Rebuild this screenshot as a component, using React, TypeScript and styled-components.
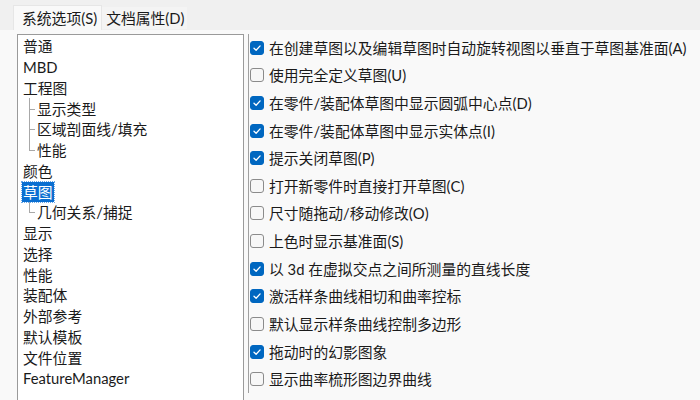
import styled, { createGlobalStyle, css } from 'styled-components';

const GlobalStyle = createGlobalStyle`
    html, body {
        margin: 0;
        padding: 0;
        background: #f0f0f0;
        overflow: hidden;
    }
    * {
        box-sizing: border-box;
    }
`;

type TreeNode = { label: string; level: number; last?: boolean; selected?: boolean };

const treeItems: TreeNode[] = [
    { label: '普通', level: 0 },
    { label: 'MBD', level: 0 },
    { label: '工程图', level: 0 },
    { label: '显示类型', level: 1 },
    { label: '区域剖面线/填充', level: 1 },
    { label: '性能', level: 1, last: true },
    { label: '颜色', level: 0 },
    { label: '草图', level: 0, selected: true },
    { label: '几何关系/捕捉', level: 1, last: true },
    { label: '显示', level: 0 },
    { label: '选择', level: 0 },
    { label: '性能', level: 0 },
    { label: '装配体', level: 0 },
    { label: '外部参考', level: 0 },
    { label: '默认模板', level: 0 },
    { label: '文件位置', level: 0 },
    { label: 'FeatureManager', level: 0 }
];

const options: { label: string; checked: boolean }[] = [
    { label: '在创建草图以及编辑草图时自动旋转视图以垂直于草图基准面(A)', checked: true },
    { label: '使用完全定义草图(U)', checked: false },
    { label: '在零件/装配体草图中显示圆弧中心点(D)', checked: true },
    { label: '在零件/装配体草图中显示实体点(I)', checked: true },
    { label: '提示关闭草图(P)', checked: true },
    { label: '打开新零件时直接打开草图(C)', checked: false },
    { label: '尺寸随拖动/移动修改(O)', checked: false },
    { label: '上色时显示基准面(S)', checked: false },
    { label: '以 3d 在虚拟交点之间所测量的直线长度', checked: true },
    { label: '激活样条曲线相切和曲率控标', checked: true },
    { label: '默认显示样条曲线控制多边形', checked: false },
    { label: '拖动时的幻影图象', checked: true },
    { label: '显示曲率梳形图边界曲线', checked: false }
];

const Tick = () => (
    <svg width="10" height="10" viewBox="0 0 10 10">
        <path d="M2 5.2 L4.1 7.2 L8.1 2.9" fill="none" stroke="#fff" strokeWidth="1.3" strokeLinecap="round" strokeLinejoin="round" />
    </svg>
);

const App = (): JSX.Element => {
    return (
        <Window>
            <GlobalStyle />
            <TabStrip>
                <Tab $active>系统选项(S)</Tab>
                <Tab>文档属性(D)</Tab>
            </TabStrip>
            <Body>
                <Tree>
                    {treeItems.map((item, i) => (
                        <TreeRow key={i} $level={item.level} $last={item.last}>
                            <TreeLabel $selected={item.selected}>{item.label}</TreeLabel>
                        </TreeRow>
                    ))}
                </Tree>
                <OptionList>
                    {options.map((opt, i) => (
                        <OptionRow key={i}>
                            <Box $checked={opt.checked}>{opt.checked && <Tick />}</Box>
                            <OptionText>{opt.label}</OptionText>
                        </OptionRow>
                    ))}
                </OptionList>
            </Body>
        </Window>
    );
};

export default App;

const uiFont = `Lato, 'Noto Sans CJK SC', sans-serif`;

const Window = styled.div`
    width: 700px;
    height: 400px;
    display: flex;
    flex-direction: column;
    background: #f0f0f0;
    font-family: ${uiFont};
    color: #1a1a1a;
    overflow: hidden;
`;

const TabStrip = styled.div`
    height: 30px;
    flex-shrink: 0;
    display: flex;
    align-items: flex-end;
    padding-left: 13px;
`;

const Tab = styled.div<{ $active?: boolean }>`
    font-size: 14.8px;
    display: flex;
    align-items: center;
    padding: 0 3px 2px 4px;
    height: 22px;
    margin-bottom: 1px;
    background: #f4f4f4;

    ${(p) =>
        p.$active &&
        css`
            height: 25px;
            margin-bottom: 0;
            padding: 0 4px 2px 8px;
            background: #f9f9f9;
            border: 1px solid #e6e6e6;
            border-bottom: none;
        `}
`;

const Body = styled.div`
    flex: 1;
    background: #f9f9f9;
    display: flex;
    align-items: flex-start;
    gap: 4px;
    padding: 4px 0 0 17px;
`;

const Tree = styled.div`
    width: 227px;
    height: 400px;
    background: #ffffff;
    border: 1px solid #9a9a9a;
    border-bottom: none;
    padding: 1px 0 0 4px;
    font-size: 14.8px;
`;

const TreeRow = styled.div<{ $level: number; $last?: boolean }>`
    position: relative;
    height: 20.75px;
    display: flex;
    align-items: center;
    padding-left: ${(p) => p.$level * 14}px;

    ${(p) =>
        p.$level > 0 &&
        css`
            &::before {
                content: '';
                position: absolute;
                left: 7px;
                top: 0;
                height: ${p.$last ? '50%' : '100%'};
                border-left: 1px solid #a8a8a8;
            }
            &::after {
                content: '';
                position: absolute;
                left: 7px;
                top: 50%;
                width: 6px;
                border-top: 1px solid #a8a8a8;
            }
        `}
`;

const TreeLabel = styled.span<{ $selected?: boolean }>`
    padding: 0 1px;
    line-height: 20px;
    white-space: nowrap;

    ${(p) =>
        p.$selected &&
        css`
            background: #0a6fd1;
            color: #ffffff;
            outline: 1px dotted #6aa8e8;
        `}
`;

const OptionList = styled.div`
    height: 359px;
    border-left: 1px solid #a0a0a0;
    padding: 0 0 0 1px;
    display: flex;
    flex-direction: column;
`;

const OptionRow = styled.div`
    height: 27.8px;
    display: flex;
    align-items: center;
    gap: 5px;
`;

const Box = styled.div<{ $checked: boolean }>`
    width: 14px;
    height: 14px;
    border-radius: 3px;
    flex-shrink: 0;
    display: flex;
    align-items: center;
    justify-content: center;
    background: ${(p) => (p.$checked ? '#0067c0' : '#f7f7f7')};
    border: 1px solid ${(p) => (p.$checked ? '#0067c0' : '#8b8b8b')};
`;

const OptionText = styled.span`
    font-size: 14.8px;
    line-height: 20px;
    white-space: nowrap;
`;
